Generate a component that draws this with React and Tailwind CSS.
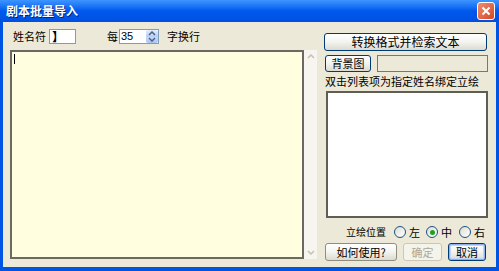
import React from "react";

const font = { fontFamily: '"Noto Sans CJK SC", "Noto Sans", sans-serif' };

function XPButton({ children, className = "", disabled = false, isDefault = false }) {
  if (disabled) {
    return (
      <div className={`shrink-0 whitespace-nowrap flex items-center justify-center rounded-[3px] border border-[#c9c7ba] bg-[#f5f4ea] text-[#aca899] text-[11px] leading-none ${className}`}>
        {children}
      </div>
    );
  }
  return (
    <div className={`shrink-0 whitespace-nowrap flex items-center justify-center rounded-[3px] border border-[#003c74] bg-gradient-to-b from-[#ffffff] via-[#f3f3ef] to-[#dcdad0] text-black text-[11px] leading-none ${isDefault ? "shadow-[inset_0_0_0_1px_#8fb0ee,inset_0_0_0_2px_#c2d5f5]" : ""} ${className}`}>
      {children}
    </div>
  );
}

function Radio({ checked, label, className = "" }) {
  return (
    <div className={`flex items-center gap-[3px] shrink-0 whitespace-nowrap ${className}`}>
      <div className="w-[12px] h-[12px] rounded-full border border-[#1c5180] bg-gradient-to-br from-[#dcdcd5] to-[#ffffff] flex items-center justify-center">
        {checked && <div className="w-[5px] h-[5px] rounded-full bg-[#21a121]" />}
      </div>
      <span className="text-[11px] leading-none">{label}</span>
    </div>
  );
}

function Chevron({ dir = "up", color = "#c5c2b2" }) {
  return (
    <svg width="8" height="5" viewBox="0 0 8 5">
      <path d={dir === "up" ? "M1 4 L4 1 L7 4" : "M1 1 L4 4 L7 1"} stroke={color} strokeWidth="1.5" fill="none" />
    </svg>
  );
}

export default function App() {
  return (
    <div className="w-[499px] h-[271px] bg-[#0054e3] flex flex-col" style={font}>
      {/* Title bar */}
      <div className="h-[22px] flex items-center justify-between pl-[6px] pr-[4px] bg-gradient-to-b from-[#3d95ff] via-[#0058ee] to-[#0050e0]">
        <span className="text-white font-bold text-[12px] leading-none whitespace-nowrap [text-shadow:1px_1px_0_#0a1f6e]">剧本批量导入</span>
        <div className="w-[18px] h-[18px] rounded-[3px] border border-white bg-gradient-to-br from-[#f08c70] to-[#d34520] flex items-center justify-center">
          <svg width="10" height="10" viewBox="0 0 10 10">
            <path d="M1.5 1.5 L8.5 8.5 M8.5 1.5 L1.5 8.5" stroke="white" strokeWidth="2" />
          </svg>
        </div>
      </div>
      {/* Body */}
      <div className="flex-1 mx-[3px] mb-[4px] bg-[#ece9d8] flex pl-[7px] pr-[8px] text-black">
        {/* Left column */}
        <div className="w-[307px] shrink-0 flex flex-col pt-[7px]">
          <div className="h-[15px] flex items-center text-[11px] leading-none whitespace-nowrap">
            <span className="ml-[3px] w-[36px] shrink-0">姓名符</span>
            <div className="w-[27px] shrink-0 h-[15px] bg-white border border-[#7f9db9] flex items-center pl-[2px] text-[12px] font-bold">】</div>
            <span className="ml-[31px] shrink-0">每</span>
            <div className="ml-[1px] shrink-0 w-[40px] h-[15px] bg-white border border-[#7f9db9] flex items-center justify-between pl-[1px]">
              <span className="text-[11px] leading-none" style={{ fontFamily: '"Liberation Sans", sans-serif' }}>35</span>
              <div className="w-[12px] h-[13px] flex flex-col">
                <div className="flex-1 rounded-t-[2px] bg-gradient-to-b from-[#e3eefd] to-[#b5cdf5] flex items-center justify-center"><Chevron dir="up" color="#4d6185" /></div>
                <div className="flex-1 rounded-b-[2px] bg-gradient-to-b from-[#c7dafb] to-[#a9c3ef] flex items-center justify-center"><Chevron dir="down" color="#4d6185" /></div>
              </div>
            </div>
            <span className="ml-[8px] shrink-0">字换行</span>
          </div>
          <div className="mt-[6px] h-[209px] flex">
            <div className="w-[294px] h-full bg-[#ffffe0] border-2 border-[#6b6a62] pl-[2px] pt-[2px]">
              <div className="w-[1px] h-[10px] bg-black" />
            </div>
            <div className="w-[13px] h-full bg-[#f6f5ef] flex flex-col items-center justify-between py-[4px]">
              <Chevron dir="up" />
              <Chevron dir="down" />
            </div>
          </div>
        </div>
        {/* Right column */}
        <div className="ml-[7px] w-[164px] shrink-0 flex flex-col pt-[11px]">
          <XPButton className="h-[18px] w-[163px] text-[12px]">转换格式并检索文本</XPButton>
          <div className="mt-[4px] h-[17px] flex">
            <XPButton className="w-[46px] ml-[1px] h-full">背景图</XPButton>
            <div className="ml-[6px] w-[111px] shrink-0 h-full border border-[#7a7867] bg-[#ece9d8]" />
          </div>
          <div className="mt-[4px] ml-[1px] text-[11px] leading-none h-[12px] whitespace-nowrap">双击列表项为指定姓名绑定立绘</div>
          <div className="mt-[3px] ml-[2px] w-[162px] h-[127px] bg-white border-2 border-[#5f5e55]" />
          <div className="mt-[7px] h-[14px] flex items-center pl-[22px] whitespace-nowrap">
            <span className="text-[10px] leading-none shrink-0 w-[48px]">立绘位置</span>
            <Radio label="左" className="w-[32px]" />
            <Radio label="中" checked className="w-[33px]" />
            <Radio label="右" className="w-[28px]" />
          </div>
          <div className="mt-[4px] h-[18px] flex gap-[6px] ml-[1px]">
            <XPButton className="w-[72px] h-full border-[#8f8d80]">如何使用?</XPButton>
            <XPButton className="w-[39px] h-full" disabled>确定</XPButton>
            <XPButton className="w-[38px] h-full" isDefault>取消</XPButton>
          </div>
        </div>
      </div>
    </div>
  );
}
